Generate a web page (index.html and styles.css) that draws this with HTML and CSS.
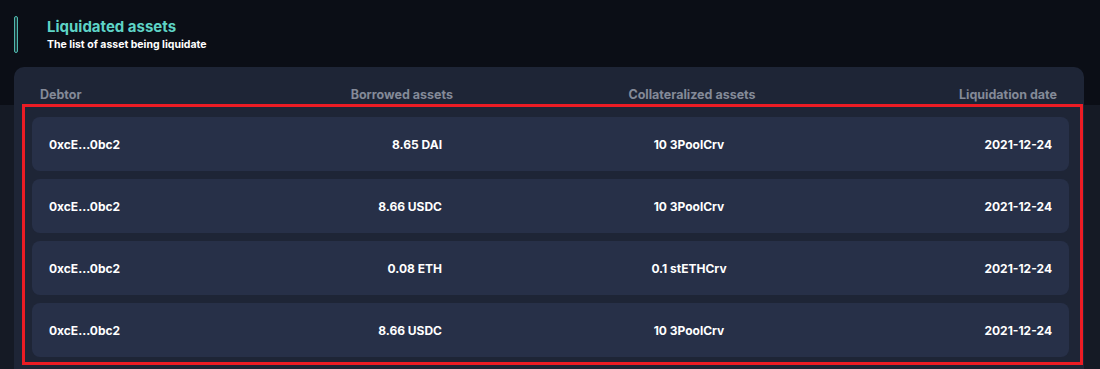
FILE: index.html
```html
<!DOCTYPE html>
<html>
<head>
<meta charset="utf-8">
<link rel="stylesheet" href="styles.css">
</head>
<body>
<div class="page">
  <header class="head">
    <span class="bar"></span>
    <div class="titles">
      <h1 class="title">Liquidated assets</h1>
      <p class="subtitle">The list of asset being liquidate</p>
    </div>
  </header>
  <section class="card">
    <div class="thead">
      <span class="c1">Debtor</span>
      <span class="c2">Borrowed assets</span>
      <span class="c3">Collateralized assets</span>
      <span class="c4">Liquidation date</span>
    </div>
    <div class="rows">
      <div class="row"><span class="c1">0xcE...0bc2</span><span class="c2">8.65 DAI</span><span class="c3">10 3PoolCrv</span><span class="c4">2021-12-24</span></div>
      <div class="row"><span class="c1">0xcE...0bc2</span><span class="c2">8.66 USDC</span><span class="c3">10 3PoolCrv</span><span class="c4">2021-12-24</span></div>
      <div class="row"><span class="c1">0xcE...0bc2</span><span class="c2">0.08 ETH</span><span class="c3">0.1 stETHCrv</span><span class="c4">2021-12-24</span></div>
      <div class="row"><span class="c1">0xcE...0bc2</span><span class="c2">8.66 USDC</span><span class="c3">10 3PoolCrv</span><span class="c4">2021-12-24</span></div>
    </div>
  </section>
  <div class="highlight"></div>
</div>
</body>
</html>
```
FILE: styles.css
```css
html, body {
  margin: 0;
  padding: 0;
}
body {
  width: 1100px;
  height: 369px;
  overflow: hidden;
  background: linear-gradient(to bottom, #0b0e16 0, #0b0e16 105px, #151a25 105px);
  font-family: Inter, "Noto Sans", sans-serif;
  -webkit-font-smoothing: antialiased;
}
.page {
  position: relative;
  padding: 16px 16px 0 14px;
}
.head {
  display: flex;
  align-items: flex-start;
  gap: 29px;
  height: 51px;
}
.bar {
  width: 2px;
  height: 35px;
  border: 1px solid #4fb8ad;
  border-radius: 2px;
  background: #1d3a3c;
}
.titles {
  padding-top: 2px;
}
.title {
  margin: 0;
  font-size: 15px;
  font-weight: 700;
  color: #5ed4c6;
  line-height: 18px;
  letter-spacing: 0;
}
.subtitle {
  margin: 2px 0 0;
  font-size: 10.5px;
  font-weight: 700;
  color: #ffffff;
  line-height: 13px;
}
.card {
  width: 1070px;
  background: #1e2536;
  border-radius: 10px 10px 0 0;
  padding: 18px 0 20px;
}
.thead {
  display: grid;
  grid-template-columns: 200px 213px 478px 1fr;
  padding: 0 27px 0 26px;
  height: 18px;
  align-items: center;
  font-size: 12.5px;
  font-weight: 700;
  color: #848a98;
}
.rows {
  display: flex;
  flex-direction: column;
  gap: 8px;
  padding: 14px 15px 0 18px;
}
.row {
  display: grid;
  grid-template-columns: 200px 193px 494px 1fr;
  align-items: center;
  height: 54px;
  padding: 0 17px;
  background: #273048;
  border-radius: 8px;
  font-size: 12px;
  font-weight: 700;
  color: #ffffff;
}
.c1 { text-align: left; }
.c2 { text-align: right; }
.c3 { text-align: center; }
.c4 { text-align: right; }
.highlight {
  position: absolute;
  left: 22px;
  top: 104px;
  width: 1055px;
  height: 255px;
  border: 3px solid #ec1c24;
  pointer-events: none;
}
```
